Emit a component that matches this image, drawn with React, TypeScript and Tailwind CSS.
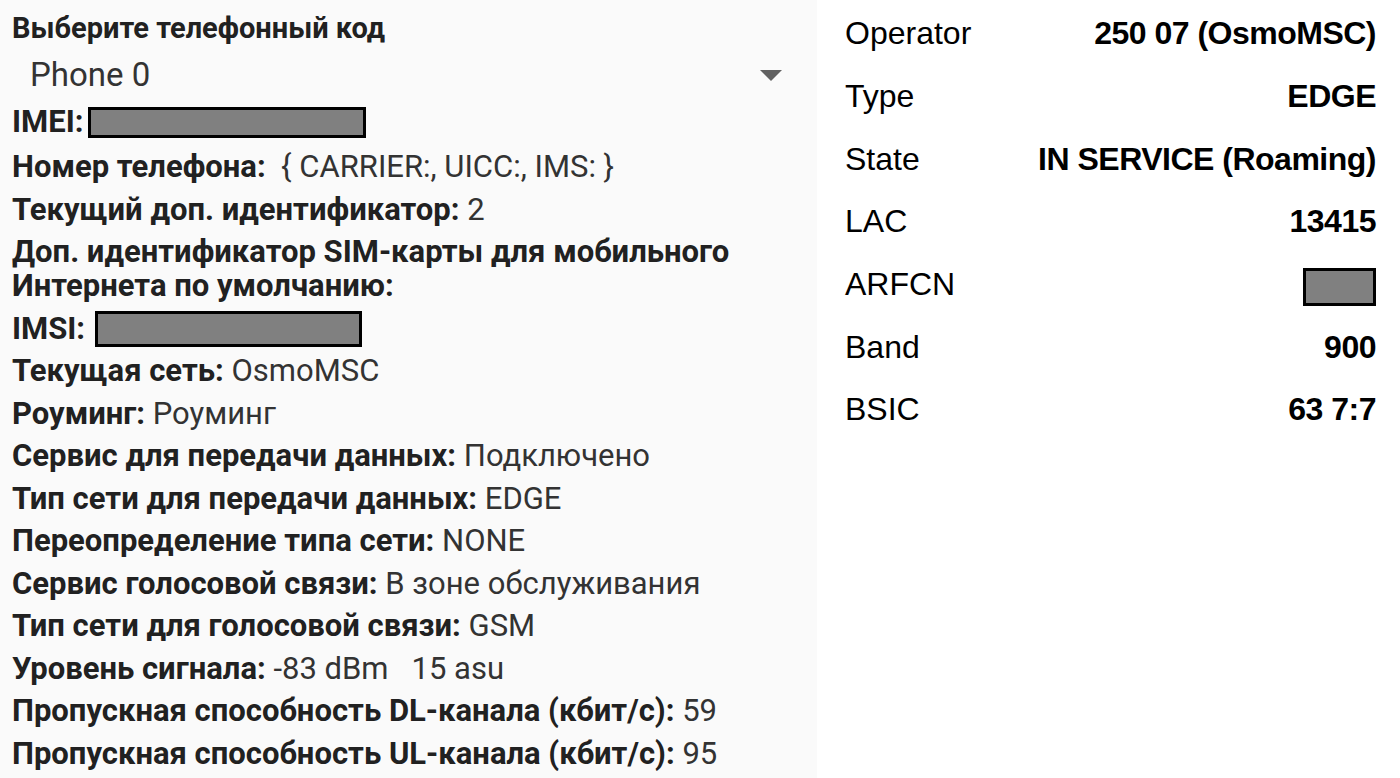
import React from 'react';

const rows: { label: string; value: React.ReactNode }[] = [
  { label: 'Номер телефона:', value: '\u00a0{ CARRIER:, UICC:, IMS: }' },
  { label: 'Текущий доп. идентификатор:', value: '2' },
  { label: 'Доп. идентификатор SIM-карты для мобильного Интернета по умолчанию:', value: '' },
  { label: 'IMSI:', value: 'imsi' },
  { label: 'Текущая сеть:', value: 'OsmoMSC' },
  { label: 'Роуминг:', value: 'Роуминг' },
  { label: 'Сервис для передачи данных:', value: 'Подключено' },
  { label: 'Тип сети для передачи данных:', value: 'EDGE' },
  { label: 'Переопределение типа сети:', value: 'NONE' },
  { label: 'Сервис голосовой связи:', value: 'В зоне обслуживания' },
  { label: 'Тип сети для голосовой связи:', value: 'GSM' },
  { label: 'Уровень сигнала:', value: '-83 dBm\u00a0\u00a0\u00a015 asu' },
  { label: 'Пропускная способность DL-канала (кбит/с):', value: '59' },
  { label: 'Пропускная способность UL-канала (кбит/с):', value: '95' },
];

const cells: [string, React.ReactNode][] = [
  ['Operator', '250 07 (OsmoMSC)'],
  ['Type', 'EDGE'],
  ['State', 'IN SERVICE (Roaming)'],
  ['LAC', '13415'],
  ['ARFCN', <span key="b" className="inline-block w-[73px] h-[38px] border-[3px] border-black bg-[#808080] align-middle" />],
  ['Band', '900'],
  ['BSIC', '63 7:7'],
];

export default function App() {
  return (
    <div className="flex w-[1400px] h-[778px] overflow-hidden bg-white">
      {/* left: phone info */}
      <div className="w-[817px] h-full shrink-0 bg-[#fafafa] pl-[12px] pr-[20px] text-[#212121] text-[31px] leading-[34px] font-['Roboto',sans-serif]">
        <div className="pt-[11px] font-bold text-[29px]">Выберите телефонный код</div>

        {/* spinner */}
        <div className="flex items-center justify-between h-[60px] pl-[18px] pr-[15px]">
          <span className="text-[33px] text-[#333]">Phone 0</span>
          <svg width="22" height="11" viewBox="0 0 22 11">
            <polygon points="0,0 22,0 11,11" fill="#616161" />
          </svg>
        </div>

        <div className="flex items-center h-[34px] mb-[11px]">
          <span className="font-bold">IMEI:</span>
          <span className="ml-[5px] inline-block w-[278px] h-[31px] border-[3px] border-black bg-[#808080]" />
        </div>

        <div className="flex flex-col gap-[8.5px]">
          {rows.map((r, i) =>
            r.value === 'imsi' ? (
              <div key={i} className="flex items-center h-[34px]">
                <span className="font-bold">IMSI:</span>
                <span className="ml-[10px] inline-block w-[267px] h-[36px] border-[3px] border-black bg-[#808080]" />
              </div>
            ) : (
              <div key={i}>
                <span className="font-bold">{r.label}</span>
                {r.value ? <span className="font-normal text-[#333]"> {r.value}</span> : null}
              </div>
            )
          )}
        </div>
      </div>

      {/* right: cell info */}
      <div className="flex-1 pt-[2px] pl-[28px] pr-[24px] text-black text-[32px] font-['Liberation_Sans',Arial,sans-serif]">
        {cells.map(([k, v]) => (
          <div key={k} className="flex items-center justify-between h-[62.67px]">
            <span>{k}</span>
            <span className="font-bold tracking-[-0.5px]">{v}</span>
          </div>
        ))}
      </div>
    </div>
  );
}
